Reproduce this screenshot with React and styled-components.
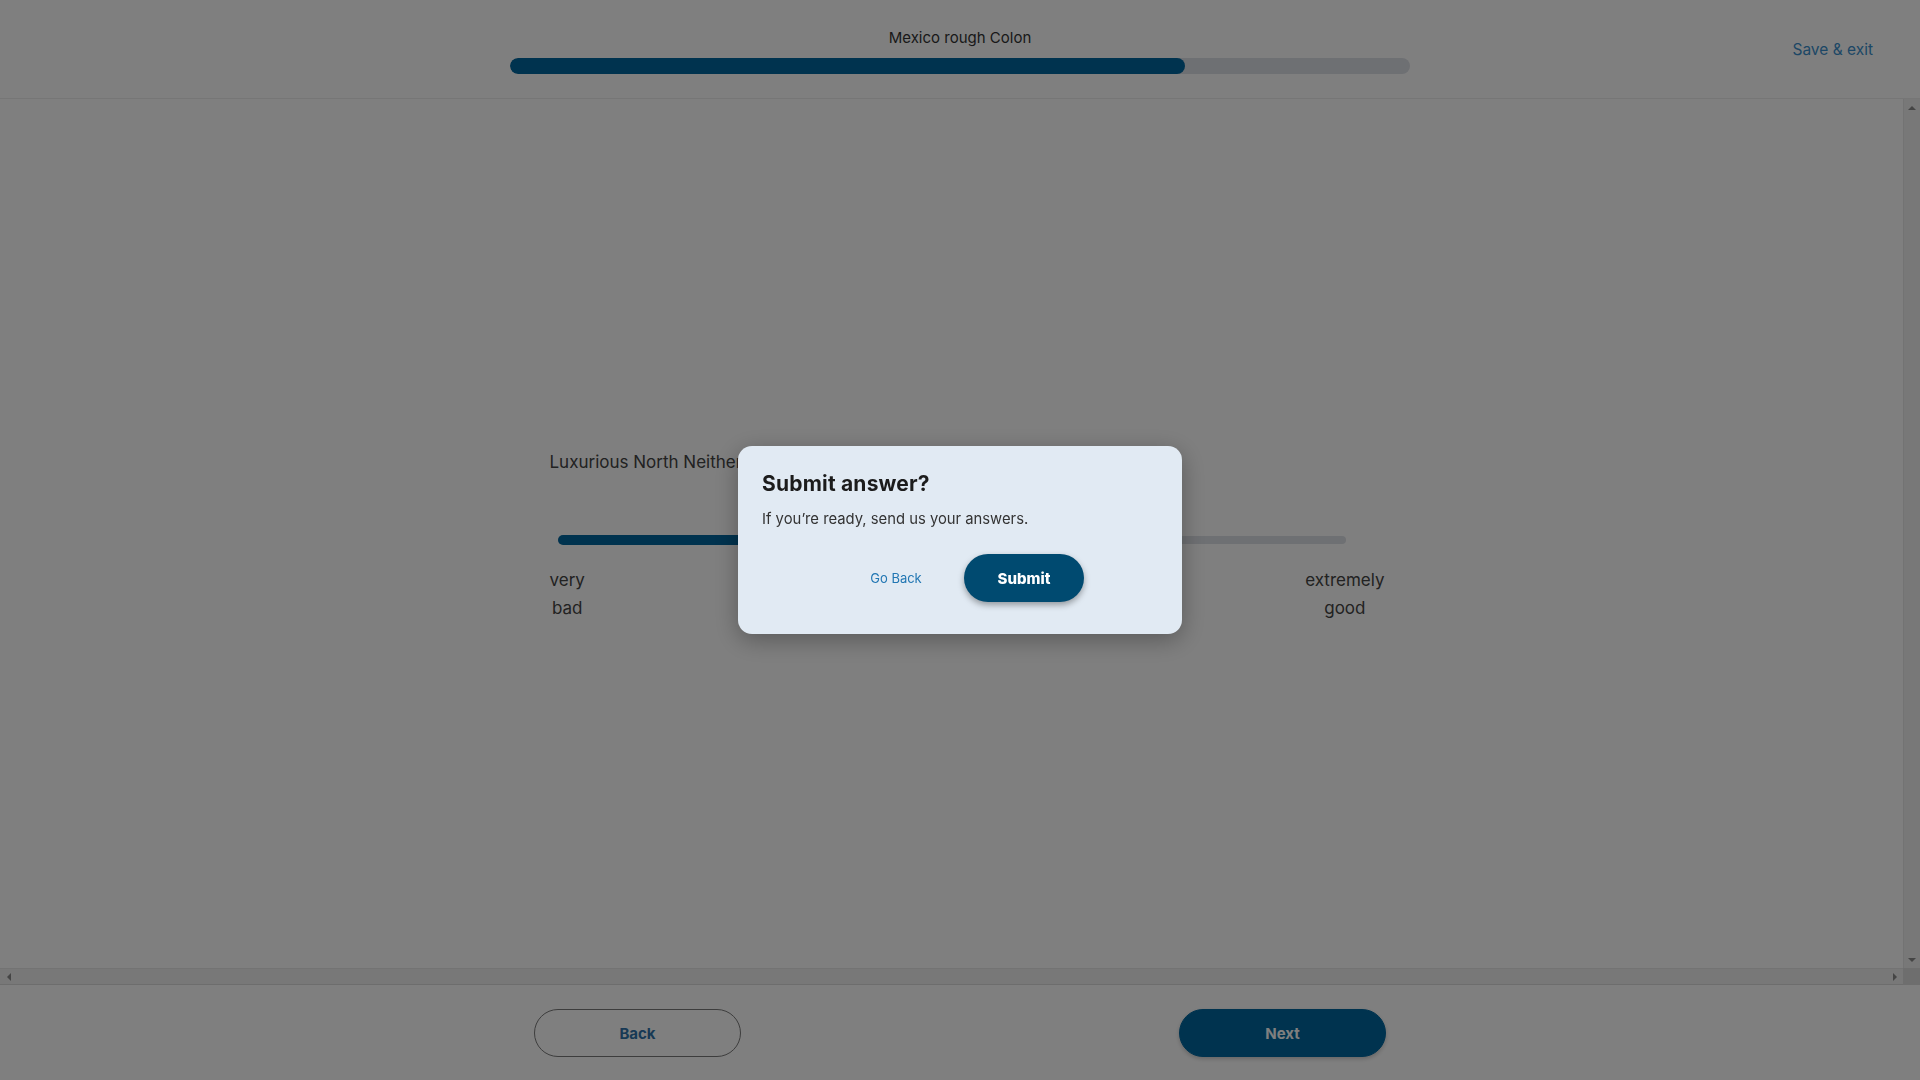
import styled, { createGlobalStyle } from "styled-components";

const GlobalStyle = createGlobalStyle`
  html, body {
    margin: 0;
    height: 100%;
    background: #ffffff;
    font-family: Inter, "Noto Sans", "Liberation Sans", sans-serif;
  }
  #root {
    height: 100%;
  }
  * {
    box-sizing: border-box;
  }
`;

const Page = styled.div`
  display: flex;
  flex-direction: column;
  height: 100vh;
  background: #ffffff;
`;

const Header = styled.header`
  display: grid;
  grid-template-columns: 1fr 900px 1fr;
  height: 99px;
  border-bottom: 1px solid #ececec;
  flex-shrink: 0;
`;

const HeaderCenter = styled.div`
  grid-column: 2;
  display: flex;
  flex-direction: column;
  align-items: center;
  gap: 11px;
  padding-top: 29px;
`;

const SurveyTitle = styled.div`
  font-size: 15px;
  line-height: 18px;
  color: #333333;
`;

const ProgressTrack = styled.div`
  width: 100%;
  height: 16px;
  border-radius: 8px;
  background: #dde0e6;
  overflow: hidden;
`;

const ProgressFill = styled.div`
  height: 100%;
  border-radius: 8px;
  background: #00669e;
`;

const HeaderRight = styled.div`
  grid-column: 3;
  display: flex;
  align-items: center;
  justify-content: flex-end;
  padding-right: 47px;
`;

const SaveLink = styled.a`
  font-size: 15.5px;
  color: #3a8fcc;
  text-decoration: none;
  cursor: pointer;
`;

/* content frame with its (drawn) scrollbars */
const ScrollFrame = styled.div`
  flex: 1;
  min-height: 0;
  display: grid;
  grid-template-columns: 1fr 17px;
  grid-template-rows: 1fr 17px;
`;

const ScrollArea = styled.main`
  overflow: hidden;
  display: flex;
  align-items: center;
  justify-content: center;
  padding-top: 5px;
`;

const Scrollbar = styled.div`
  display: flex;
  flex-direction: ${(p) => (p.$vertical ? "column" : "row")};
  justify-content: space-between;
  align-items: center;
  background: #f1f1f1;
  border-top: ${(p) => (p.$vertical ? "none" : "1px solid #e6e6e6")};
  border-bottom: ${(p) => (p.$vertical ? "none" : "1px solid #dadada")};
  border-left: ${(p) => (p.$vertical ? "1px solid #e6e6e6" : "none")};
`;

const ScrollCorner = styled.div`
  background: #dcdcdc;
`;

const ArrowBox = styled.span`
  width: 17px;
  height: 17px;
  display: flex;
  align-items: center;
  justify-content: center;
`;

const Arrow = styled.span`
  width: 0;
  height: 0;
  border-style: solid;
  border-color: transparent;
  ${(p) =>
    p.$dir === "up" &&
    `border-width: 0 4px 4px 4px; border-bottom-color: #8a8a8a;`}
  ${(p) =>
    p.$dir === "down" &&
    `border-width: 4px 4px 0 4px; border-top-color: #8a8a8a;`}
  ${(p) =>
    p.$dir === "left" &&
    `border-width: 4px 4px 4px 0; border-right-color: #8a8a8a;`}
  ${(p) =>
    p.$dir === "right" &&
    `border-width: 4px 0 4px 4px; border-left-color: #8a8a8a;`}
`;

const Question = styled.section`
  width: 804px;
  display: flex;
  flex-direction: column;
`;

const QuestionText = styled.div`
  font-size: 17px;
  line-height: 24px;
  color: #444444;
`;

const SliderTrack = styled.div`
  position: relative;
  margin: 61px 8px 0;
  height: 10px;
  display: flex;
  align-items: center;
`;

const SliderRail = styled.div`
  width: 100%;
  height: 8px;
  border-radius: 4px;
  background: #dde0e6;
`;

const SliderFill = styled.div`
  position: absolute;
  left: 0;
  top: 0;
  height: 10px;
  border-radius: 5px;
  background: #00669e;
`;

const SliderThumb = styled.div`
  position: absolute;
  top: 50%;
  width: 26px;
  height: 26px;
  border-radius: 50%;
  background: #00669e;
  transform: translate(-50%, -50%);
`;

const Labels = styled.div`
  display: flex;
  justify-content: space-between;
  margin-top: 21px;
  margin-right: -31px;
`;

const ScaleLabel = styled.div`
  font-size: 17px;
  line-height: 28px;
  color: #444444;
  text-align: center;
`;

const Footer = styled.footer`
  flex-shrink: 0;
  height: 95px;
  display: flex;
  justify-content: center;
  padding-top: 24px;
`;

const FooterInner = styled.div`
  width: 852px;
  display: flex;
  justify-content: space-between;
  align-items: flex-start;
`;

const NavButton = styled.button`
  width: 207px;
  height: 48px;
  border-radius: 24px;
  font-family: inherit;
  font-size: 15px;
  font-weight: 700;
  cursor: pointer;
  border: 1px solid ${(p) => (p.$primary ? "#00669e" : "#7a7a7a")};
  background: ${(p) => (p.$primary ? "#00669e" : "#ffffff")};
  color: ${(p) => (p.$primary ? "#ffffff" : "#2f72aa")};
  box-shadow: ${(p) => (p.$primary ? "0 2px 4px rgba(0,0,0,0.2)" : "none")};
`;

const Backdrop = styled.div`
  position: fixed;
  inset: 0;
  background: rgba(0, 0, 0, 0.5);
  display: flex;
  align-items: center;
  justify-content: center;
`;

const Dialog = styled.div`
  width: 444px;
  background: #e1eaf3;
  border-radius: 14px;
  padding: 24px 24px 32px;
  box-shadow: 0 6px 24px rgba(0, 0, 0, 0.3);
`;

const DialogTitle = styled.h2`
  margin: 0;
  font-size: 21px;
  line-height: 28px;
  font-weight: 700;
  letter-spacing: 0.2px;
  color: #1c1c1c;
`;

const DialogText = styled.p`
  margin: 11px 0 0;
  font-size: 14.8px;
  line-height: 20px;
  color: #333333;
`;

const DialogActions = styled.div`
  display: flex;
  justify-content: center;
  gap: 8px;
  margin-top: 25px;
`;

const DialogButton = styled.button`
  width: 120px;
  height: 48px;
  border: none;
  border-radius: 24px;
  font-family: inherit;
  cursor: pointer;
  background: ${(p) => (p.$primary ? "#004a70" : "transparent")};
  color: ${(p) => (p.$primary ? "#ffffff" : "#2277b3")};
  font-size: ${(p) => (p.$primary ? "15px" : "13px")};
  font-weight: ${(p) => (p.$primary ? 800 : 400)};
  box-shadow: ${(p) => (p.$primary ? "0 3px 6px rgba(0,0,0,0.35)" : "none")};
`;

const progress = 75;
const sliderValue = 45;

const App = () => {
  return (
    <>
      <GlobalStyle />
      <Page>
        <Header>
          <HeaderCenter>
            <SurveyTitle>Mexico rough Colon</SurveyTitle>
            <ProgressTrack>
              <ProgressFill style={{ width: `${progress}%` }} />
            </ProgressTrack>
          </HeaderCenter>
          <HeaderRight>
            <SaveLink>Save &amp; exit</SaveLink>
          </HeaderRight>
        </Header>

        <ScrollFrame>
          <ScrollArea>
            <Question>
              <QuestionText>Luxurious North Neither</QuestionText>
              <SliderTrack>
                <SliderRail />
                <SliderFill style={{ width: `${sliderValue}%` }} />
                <SliderThumb style={{ left: `${sliderValue}%` }} />
              </SliderTrack>
              <Labels>
                <ScaleLabel>
                  very
                  <br />
                  bad
                </ScaleLabel>
                <ScaleLabel>
                  extremely
                  <br />
                  good
                </ScaleLabel>
              </Labels>
            </Question>
          </ScrollArea>
          <Scrollbar $vertical>
            <ArrowBox>
              <Arrow $dir="up" />
            </ArrowBox>
            <ArrowBox>
              <Arrow $dir="down" />
            </ArrowBox>
          </Scrollbar>
          <Scrollbar>
            <ArrowBox>
              <Arrow $dir="left" />
            </ArrowBox>
            <ArrowBox>
              <Arrow $dir="right" />
            </ArrowBox>
          </Scrollbar>
          <ScrollCorner />
        </ScrollFrame>

        <Footer>
          <FooterInner>
            <NavButton>Back</NavButton>
            <NavButton $primary>Next</NavButton>
          </FooterInner>
        </Footer>
      </Page>

      <Backdrop>
        <Dialog>
          <DialogTitle>Submit answer?</DialogTitle>
          <DialogText>If you’re ready, send us your answers.</DialogText>
          <DialogActions>
            <DialogButton>Go Back</DialogButton>
            <DialogButton $primary>Submit</DialogButton>
          </DialogActions>
        </Dialog>
      </Backdrop>
    </>
  );
};

export default App;
